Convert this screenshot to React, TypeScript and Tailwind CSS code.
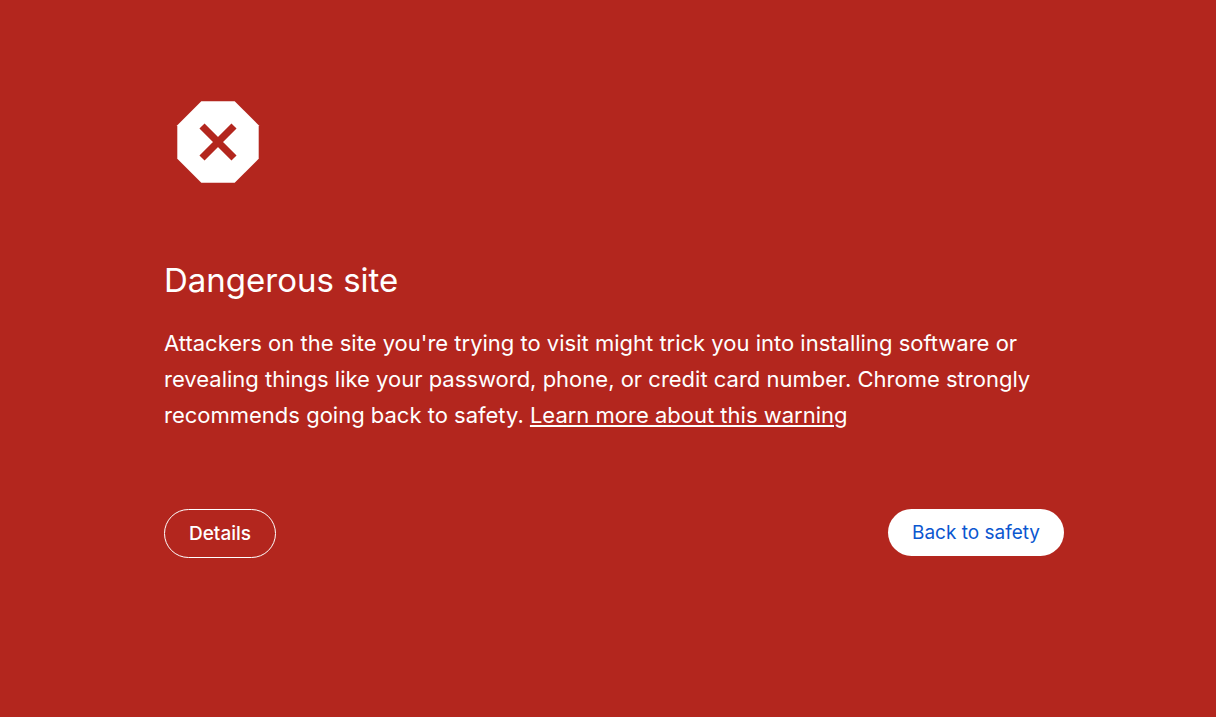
export default function App() {
  return (
    <div className="min-h-screen bg-[#b3261e] pl-3 font-['Inter',sans-serif] text-white">
      <main className="mx-auto w-full max-w-[900px] pt-[88px]">
        <svg viewBox="0 0 108 108" className="h-[108px] w-[108px]" aria-hidden="true">
          <path fill="currentColor" d="M37.3 13.300h33.400L94.700 37.300v33.400L70.700 94.700H37.300L13.300 70.700V37.300z" />
          <path stroke="#b3261e" strokeWidth="7.200" d="m38 38 32 32m0-32-32 32" />
        </svg>
        <h1 className="mt-16 text-[33px] leading-[40px]">Dangerous site</h1>
        <p className="mt-[25px] text-[22px] leading-[36px]">
          Attackers on the site you're trying to visit might trick you into installing software or revealing things like your password, phone, or credit card number. Chrome strongly recommends going back to safety.{' '}
          <a href="#" className="underline">Learn more about this warning</a>
        </p>
        <div className="mt-19 flex items-start justify-between">
          <button type="button" className="h-[49px] rounded-full border border-white px-6 pt-0.5 text-[19px] font-medium">Details</button>
          <button type="button" className="h-[47px] rounded-full bg-white px-6 pt-0.5 text-[19px] text-[#0b57d0]">Back to safety</button>
        </div>
      </main>
    </div>
  );
}
